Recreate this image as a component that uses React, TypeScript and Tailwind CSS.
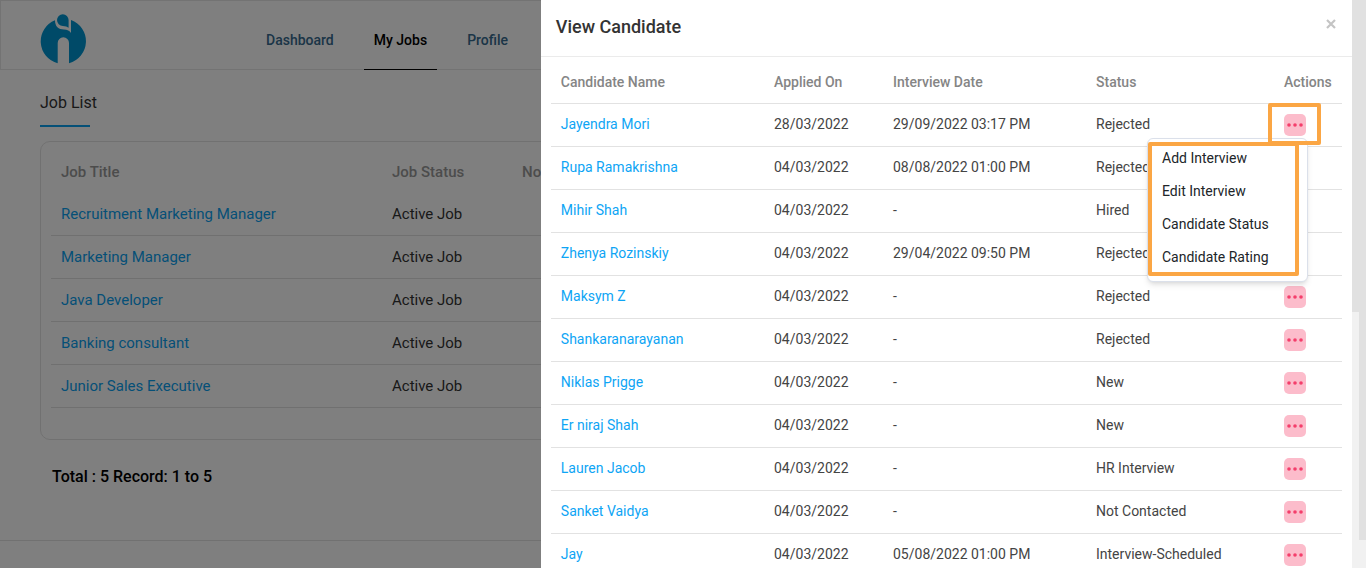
import React from "react";

const jobs = [
  "Recruitment Marketing Manager",
  "Marketing Manager",
  "Java Developer",
  "Banking consultant",
  "Junior Sales Executive",
];

type Candidate = { name: string; applied: string; interview: string; status: string };

const candidates: Candidate[] = [
  { name: "Jayendra Mori", applied: "28/03/2022", interview: "29/09/2022 03:17 PM", status: "Rejected" },
  { name: "Rupa Ramakrishna", applied: "04/03/2022", interview: "08/08/2022 01:00 PM", status: "Rejected" },
  { name: "Mihir Shah", applied: "04/03/2022", interview: "-", status: "Hired" },
  { name: "Zhenya Rozinskiy", applied: "04/03/2022", interview: "29/04/2022 09:50 PM", status: "Rejected" },
  { name: "Maksym Z", applied: "04/03/2022", interview: "-", status: "Rejected" },
  { name: "Shankaranarayanan", applied: "04/03/2022", interview: "-", status: "Rejected" },
  { name: "Niklas Prigge", applied: "04/03/2022", interview: "-", status: "New" },
  { name: "Er niraj Shah", applied: "04/03/2022", interview: "-", status: "New" },
  { name: "Lauren Jacob", applied: "04/03/2022", interview: "-", status: "HR Interview" },
  { name: "Sanket Vaidya", applied: "04/03/2022", interview: "-", status: "Not Contacted" },
  { name: "Jay", applied: "04/03/2022", interview: "05/08/2022 01:00 PM", status: "Interview-Scheduled" },
];

const menuItems = ["Add Interview", "Edit Interview", "Candidate Status", "Candidate Rating"];

function Logo() {
  return (
    <svg viewBox="0 0 46 51" className="h-[51px] w-[46px]" role="img" aria-label="Company logo">
      <path
        fill="#0095d0"
        d="M15 6.3A22.6 22.6 0 0 0 17.700 49.200V29a5.650 5.700 0 0 1 11.300 0v20.200A22.600 22.600 0 0 0 31 6.050V19Q29 15.500 24 15.500C18.500 15.500 15 12.500 15 6.300Z"
      />
      <path fill="#0095d0" d="M22.800 .3a5.800 5.800 0 0 1 5.800 5.800v7.700Q26.800 11.900 22.800 11.900a5.800 5.800 0 0 1 0-11.600Z" />
    </svg>
  );
}

function ActionsMenu() {
  return (
    <div className="absolute top-6 -right-0.5 z-10 w-[161px] rounded-md border border-[#dbe0ea] bg-white pt-[3px] pb-[7px] shadow-md">
      <ul>
        {menuItems.map((item) => (
          <li key={item}>
            <button type="button" className="block h-[33px] w-full px-3.5 text-left text-[14px] text-[#212529]">
              {item}
            </button>
          </li>
        ))}
      </ul>
      <div className="pointer-events-none absolute top-[3px] left-0 h-[134px] w-[151px] rounded-xs border-4 border-[#fba644]" />
    </div>
  );
}

function ActionsCell({ name, open }: { name: string; open: boolean }) {
  return (
    <div className="relative mt-px size-[22px]">
      <button
        type="button"
        aria-label={`Actions for ${name}`}
        className="flex size-[22px] items-center justify-center rounded-[5px] bg-[#fcbccb]"
      >
        <svg viewBox="0 0 16 4" className="h-1 w-4" fill="#f43e6b" aria-hidden="true">
          <circle cx="2" cy="2" r="1.8" />
          <circle cx="8" cy="2" r="1.8" />
          <circle cx="14" cy="2" r="1.8" />
        </svg>
      </button>
      {open && <ActionsMenu />}
      {open && (
        <div className="pointer-events-none absolute -top-[11px] -left-4 z-20 h-[42px] w-[53px] rounded-xs border-4 border-[#fba644]" />
      )}
    </div>
  );
}

function JobsPage() {
  return (
    <div className="flex h-screen flex-col bg-white">
      <header className="flex h-[70px] shrink-0 border border-[#e6e6e6] pl-[39px]">
        <div className="w-[216px] pt-[13px]">
          <Logo />
        </div>
        <nav className="-mb-px flex gap-5 text-[14px] font-medium text-[#366a8e]">
          <a href="#dashboard" className="flex items-center border-b border-transparent px-2.5 pt-2.5">
            Dashboard
          </a>
          <a href="#jobs" aria-current="page" className="flex items-center border-b border-black px-2.5 pt-2.5 text-black">
            My Jobs
          </a>
          <a href="#profile" className="flex items-center border-b border-transparent px-2.5 pt-2.5">
            Profile
          </a>
        </nav>
      </header>
      <main className="flex-1 px-10 pt-[21px]">
        <h1 className="text-[16px] leading-6 text-[#333]">Job List</h1>
        <div className="mt-2.5 h-0.5 w-[50px] bg-[#0aa0ef]" />
        <section className="mt-3.5 rounded-[10px] border border-[#e3e3e3] px-2.5 pt-[7px] pb-[31px]">
          <table className="w-full table-fixed text-left text-[15px] text-[#333]">
            <colgroup>
              <col className="w-[331px]" />
              <col className="w-[130px]" />
              <col />
            </colgroup>
            <thead>
              <tr className="h-[43px] text-[#999]">
                <th className="px-2.5 pt-1 font-medium">Job Title</th>
                <th className="px-2.5 pt-1 font-medium">Job Status</th>
                <th className="px-2.5 pt-1 font-medium">No. of Positions</th>
              </tr>
            </thead>
            <tbody>
              {jobs.map((job) => (
                <tr key={job} className="h-[43px] border-b border-[#e0e0e0]">
                  <td className="px-2.5 pt-0.5">
                    <a href="#job" className="text-[#0aa0ef]">
                      {job}
                    </a>
                  </td>
                  <td className="px-2.5 pt-0.5">Active Job</td>
                  <td />
                </tr>
              ))}
            </tbody>
          </table>
        </section>
        <p className="mt-[25px] px-3 text-[16px] leading-6 font-medium text-black">Total : 5 Record: 1 to 5</p>
      </main>
      <footer className="h-7 border-t border-[#e3e3e3]" />
    </div>
  );
}

function CandidatePanel() {
  return (
    <section role="dialog" aria-labelledby="panel-title" className="h-full w-3/5 overflow-hidden bg-white">
      <header className="flex h-[57px] items-center justify-between border-b border-[#ebebeb] px-[15px] pb-1">
        <h2 id="panel-title" className="text-[18px] font-medium text-[#333]">
          View Candidate
        </h2>
        <button type="button" aria-label="Close" className="flex size-3 items-center justify-center pb-1">
          <svg viewBox="0 0 10 10" className="size-2.5 shrink-0" stroke="#c4c4c4" strokeWidth="2.2" aria-hidden="true">
            <path d="M1 1l8 8M9 1L1 9" />
          </svg>
        </button>
      </header>
      <div className="px-2.5 pt-[3px]">
        <table className="w-full table-fixed text-left text-[14px] text-[#444]">
          <colgroup>
            <col />
            <col className="w-[119px]" />
            <col className="w-[203px]" />
            <col className="w-[188px]" />
            <col className="w-[68px]" />
          </colgroup>
          <thead>
            <tr className="h-[43px] border-b border-[#e2e2e2] text-[#858585]">
              <th className="px-2.5 pt-0.5 font-medium">Candidate Name</th>
              <th className="px-2.5 pt-0.5 font-medium">Applied On</th>
              <th className="px-2.5 pt-0.5 font-medium">Interview Date</th>
              <th className="px-2.5 pt-0.5 font-medium">Status</th>
              <th className="px-2.5 pt-0.5 font-medium">Actions</th>
            </tr>
          </thead>
          <tbody>
            {candidates.map((c, i) => (
              <tr key={c.name} className="h-[43px] border-b border-[#e2e2e2]">
                <td className="px-2.5">
                  <a href="#candidate" className="text-[#0ea5f5]">
                    {c.name}
                  </a>
                </td>
                <td className="px-2.5">{c.applied}</td>
                <td className="px-2.5">{c.interview}</td>
                <td className="px-2.5">{c.status}</td>
                <td className="px-2.5">
                  <ActionsCell name={c.name} open={i === 0} />
                </td>
              </tr>
            ))}
          </tbody>
        </table>
      </div>
    </section>
  );
}

export default function App() {
  return (
    <div className="h-screen overflow-hidden font-['Roboto',sans-serif]">
      <JobsPage />
      <div className="fixed inset-0 flex">
        <div className="flex flex-1 justify-end bg-black/50">
          <CandidatePanel />
        </div>
        <div className="w-[7px] bg-[#f1f1f1]">
          <div className="h-[55%] bg-[#e1e1e1]" />
        </div>
        <div className="w-[7px] bg-[#f1f1f1]">
          <div className="h-[95%] bg-[#e1e1e1]" />
        </div>
      </div>
    </div>
  );
}
